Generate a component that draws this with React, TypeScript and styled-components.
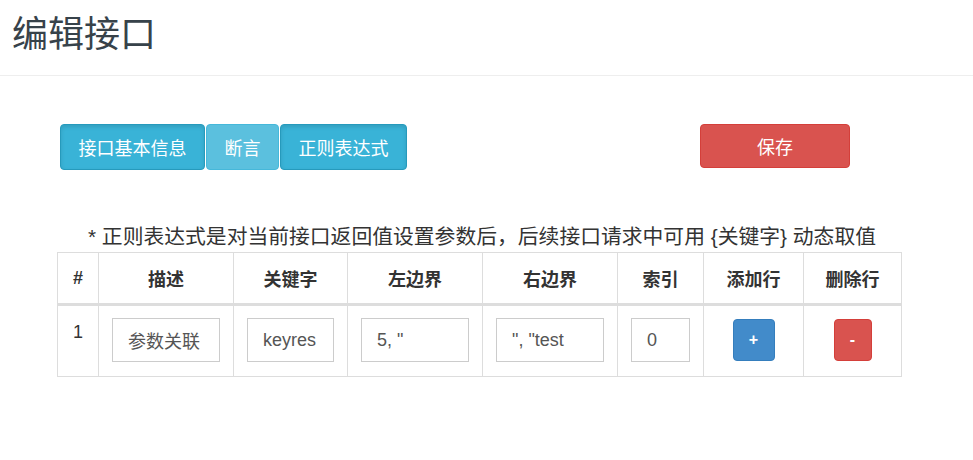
import React from "react";
import styled, { createGlobalStyle } from "styled-components";

const Global = createGlobalStyle`
  html, body { margin: 0; padding: 0; background: #fff; }
  body {
    font-family: "Liberation Sans", "Noto Sans CJK SC", sans-serif;
    color: #333;
  }
  * { box-sizing: border-box; }
`;

const Header = styled.header`
  height: 76px;
  padding: 11px 12px 0;
  border-bottom: 1px solid #eee;
`;

const Title = styled.h1`
  margin: 0;
  font-size: 36px;
  line-height: 40px;
  font-weight: 400;
  color: #37424a;
  font-family: "Noto Sans CJK SC", sans-serif;
`;

const Content = styled.main`
  padding: 48px 0 0 57px;
  width: 901px;
`;

const Toolbar = styled.div`
  display: flex;
  align-items: flex-start;
  width: 793px;
  padding-left: 3px;
`;

const TabGroup = styled.div`
  display: flex;
  gap: 1px;
`;

const TabButton = styled.button<{ $active?: boolean; $w: number }>`
  width: ${(p) => p.$w}px;
  height: 46px;
  border-radius: 4px;
  border: 1px solid ${(p) => (p.$active ? "#269abc" : "#46b8da")};
  background: ${(p) => (p.$active ? "#39b3d7" : "#5bc0de")};
  box-shadow: ${(p) => (p.$active ? "inset 0 2px 4px rgba(0,0,0,.12)" : "none")};
  color: #fff;
  font-size: 18px;
  font-family: "Noto Sans CJK SC", sans-serif;
  padding: 0;
  cursor: pointer;
`;

const SaveButton = styled.button`
  margin-left: auto;
  width: 150px;
  height: 44px;
  border-radius: 4px;
  border: 1px solid #d43f3a;
  background: #d9534f;
  color: #fff;
  font-size: 18px;
  font-family: "Noto Sans CJK SC", sans-serif;
  padding: 0;
`;

const Note = styled.p`
  margin: 55px 0 3px;
  width: 844px;
  text-align: center;
  font-size: 20.8px;
  line-height: 24px;
  color: #333;
  padding-left: 6px;
  white-space: nowrap;
  font-family: "Liberation Sans", "Noto Sans CJK SC", sans-serif;
`;

const Table = styled.table`
  width: 844px;
  border-collapse: collapse;
  table-layout: fixed;
  border: 1px solid #ddd;
`;

const Th = styled.th`
  height: 52px;
  padding: 0;
  border: 1px solid #ddd;
  border-bottom: 3px solid #ddd;
  font-size: 18px;
  font-weight: 700;
  text-align: center;
  vertical-align: middle;
  color: #333;
  font-family: "Liberation Sans", "Noto Sans CJK SC", sans-serif;
`;

const Td = styled.td<{ $align?: string }>`
  border: 1px solid #ddd;
  padding: 12px 13px 14px;
  vertical-align: top;
  text-align: ${(p) => p.$align || "left"};
`;

const IndexText = styled.div`
  font-size: 18px;
  line-height: 24px;
  text-align: center;
  color: #333;
  padding-top: 2px;
`;

const Input = styled.input`
  display: block;
  width: 100%;
  height: 44px;
  border: 1px solid #ccc;
  padding: 0 0 0 15px;
  font-size: 18px;
  color: #555;
  font-family: "Liberation Sans", "Noto Sans CJK SC", sans-serif;
  background: #fff;
  outline: none;
`;

const RowButton = styled.button<{ $kind: "add" | "del" }>`
  display: inline-block;
  width: ${(p) => (p.$kind === "add" ? 42 : 38)}px;
  height: 42px;
  margin-top: 1px;
  border-radius: 4px;
  border: 1px solid ${(p) => (p.$kind === "add" ? "#357ebd" : "#d43f3a")};
  background: ${(p) => (p.$kind === "add" ? "#428bca" : "#d9534f")};
  color: #fff;
  font-size: 16px;
  font-weight: 700;
  padding: 0;
  font-family: "Liberation Sans", sans-serif;
`;

const cols = [41, 135, 114, 135, 135, 86, 100, 98];
const heads = ["#", "描述", "关键字", "左边界", "右边界", "索引", "添加行", "删除行"];

export default function App() {
  return (
    <>
      <Global />
      <Header>
        <Title>编辑接口</Title>
      </Header>
      <Content>
        <Toolbar>
          <TabGroup>
            <TabButton $active $w={145}>接口基本信息</TabButton>
            <TabButton $w={73}>断言</TabButton>
            <TabButton $active $w={127}>正则表达式</TabButton>
          </TabGroup>
          <SaveButton>保存</SaveButton>
        </Toolbar>
        <Note>* 正则表达式是对当前接口返回值设置参数后，后续接口请求中可用 {"{关键字}"} 动态取值</Note>
        <Table>
          <colgroup>
            {cols.map((w, i) => (
              <col key={i} style={{ width: w }} />
            ))}
          </colgroup>
          <thead>
            <tr>
              {heads.map((h) => (
                <Th key={h}>{h}</Th>
              ))}
            </tr>
          </thead>
          <tbody>
            <tr>
              <Td><IndexText>1</IndexText></Td>
              <Td><Input defaultValue="参数关联" /></Td>
              <Td><Input defaultValue="keyres" /></Td>
              <Td><Input defaultValue={'5, "'} /></Td>
              <Td><Input defaultValue={'", "test'} /></Td>
              <Td><Input defaultValue="0" /></Td>
              <Td $align="center"><RowButton $kind="add">+</RowButton></Td>
              <Td $align="center"><RowButton $kind="del">-</RowButton></Td>
            </tr>
          </tbody>
        </Table>
      </Content>
    </>
  );
}
